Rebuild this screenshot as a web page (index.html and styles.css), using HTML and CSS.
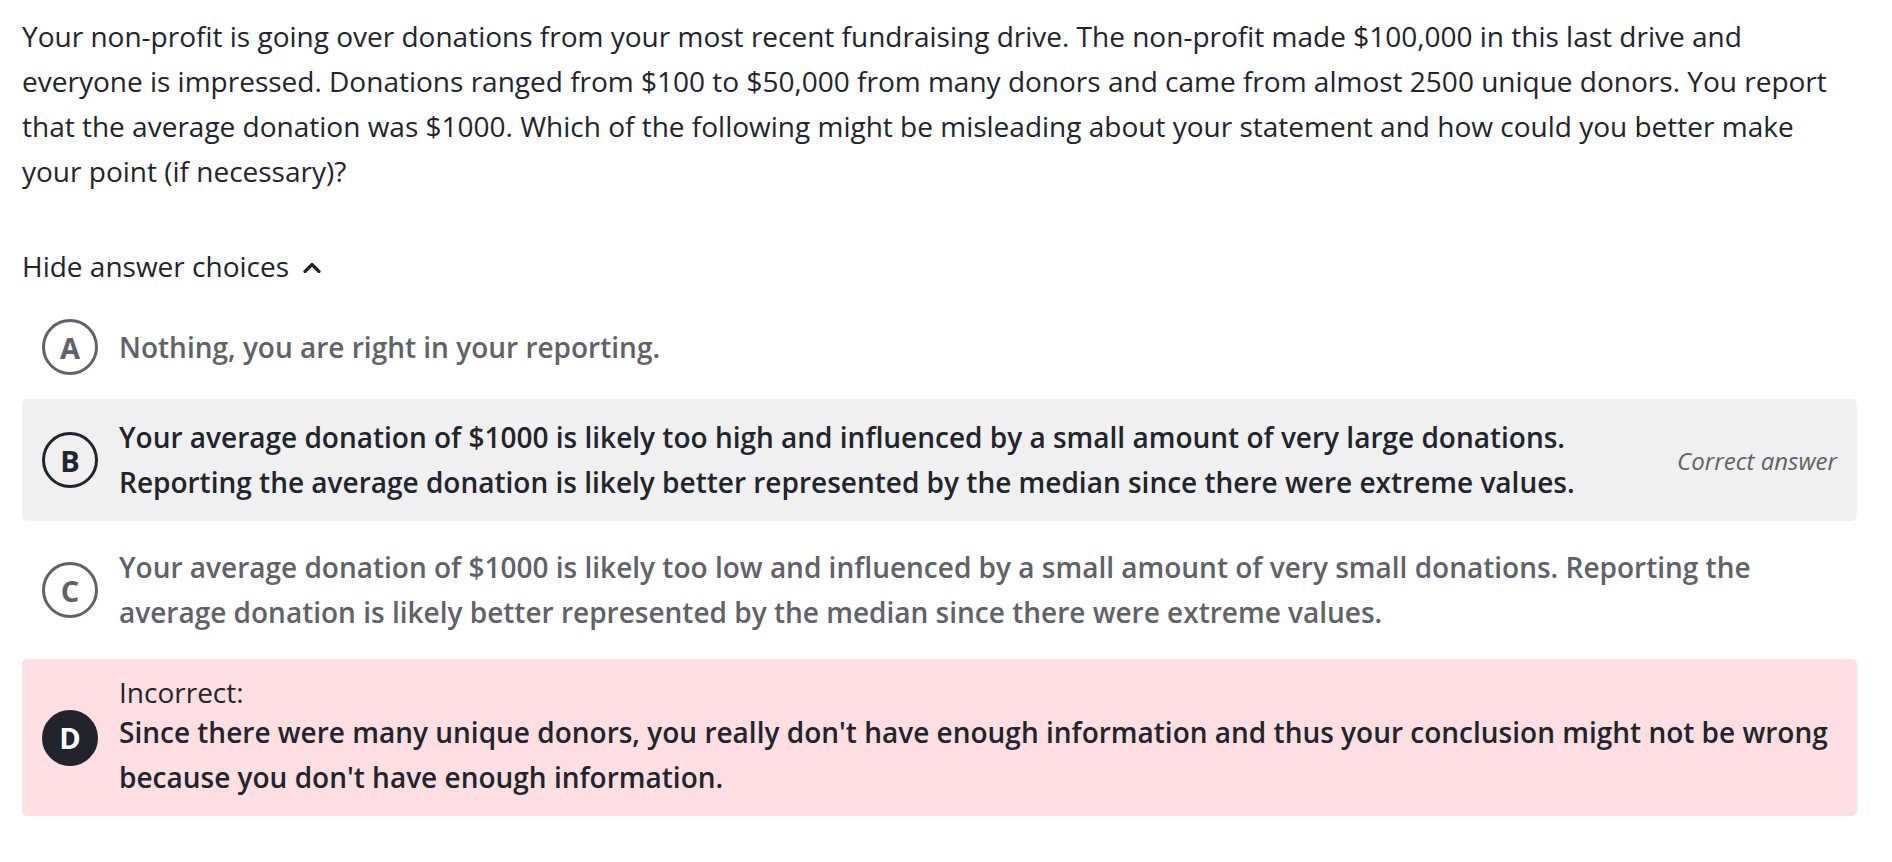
FILE: index.html
```html
<!DOCTYPE html>
<html lang="en">
<head>
<meta charset="utf-8">
<title>Question</title>
<link rel="stylesheet" href="styles.css">
</head>
<body>
<main class="page">
  <p class="question">Your non-profit is going over donations from your most recent fundraising drive. The non-profit made $100,000 in this last drive and everyone is impressed. Donations ranged from $100 to $50,000 from many donors and came from almost 2500 unique donors. You report that the average donation was $1000. Which of the following might be misleading about your statement and how could you better make your point (if necessary)?</p>

  <div class="toggle">
    <span>Hide answer choices</span>
    <svg class="chevron" width="18" height="11" viewBox="0 0 18 11" aria-hidden="true"><path d="M2 9.5 L9 2.5 L16 9.5" fill="none" stroke="#21242c" stroke-width="3.2" stroke-linecap="round" stroke-linejoin="round"/></svg>
  </div>

  <ul class="choices">
    <li class="choice choice-muted">
      <span class="circle">A</span>
      <span class="text">Nothing, you are right in your reporting.</span>
    </li>
    <li class="choice choice-correct">
      <span class="circle">B</span>
      <span class="text">Your average donation of $1000 is likely too high and influenced by a small amount of very large donations. Reporting the average donation is likely better represented by the median since there were extreme values.</span>
      <span class="tag">Correct answer</span>
    </li>
    <li class="choice choice-muted">
      <span class="circle">C</span>
      <span class="text">Your average donation of $1000 is likely too low and influenced by a small amount of very small donations. Reporting the average donation is likely better represented by the median since there were extreme values.</span>
    </li>
    <li class="choice choice-wrong">
      <span class="circle circle-filled">D</span>
      <div class="text">
        <div class="label">Incorrect:</div>
        <div>Since there were many unique donors, you really don't have enough information and thus your conclusion might not be wrong because you don't have enough information.</div>
      </div>
    </li>
  </ul>
</main>
</body>
</html>
```

FILE: styles.css
```css
* { box-sizing: border-box; }

html, body {
  margin: 0;
  padding: 0;
  background: #ffffff;
}

body {
  font-family: "Open Sans", "Noto Sans", "Liberation Sans", sans-serif;
  color: #21242c;
  font-size: 28px;
  line-height: 45px;
}

.page {
  padding: 14px 35px 0 22px;
}

.question {
  margin: 0;
  font-size: 28px;
  max-width: 1815px;
}

.toggle {
  margin-top: 50px;
  display: flex;
  align-items: center;
  gap: 14px;
  height: 45px;
}

.chevron {
  display: block;
  margin-top: 1px;
}

.choices {
  list-style: none;
  margin: 14px 0 0;
  padding: 0;
  display: flex;
  flex-direction: column;
  gap: 8px;
}

.choice {
  display: flex;
  align-items: center;
  gap: 21px;
  padding: 16px 20px;
  border-radius: 5px;
}

.circle {
  flex: none;
  width: 56px;
  height: 56px;
  border-radius: 50%;
  border: 3px solid #21242c;
  display: flex;
  align-items: center;
  justify-content: center;
  font-weight: 700;
  font-size: 29px;
  line-height: 1;
}

.text {
  flex: 1;
  font-weight: 600;
}

.choice-muted {
  color: #5f6268;
}

.choice-muted .circle {
  border-color: #5f6268;
}

.choice-correct {
  background: #f0f0f0;
}

.tag {
  flex: none;
  font-style: italic;
  font-size: 24px;
  color: #5f6268;
  margin-left: 10px;
}

.choice-wrong {
  background: #ffdfe1;
}

.circle-filled {
  background: #21242c;
  color: #ffffff;
}

.label {
  font-weight: 400;
  line-height: 35px;
}
```
